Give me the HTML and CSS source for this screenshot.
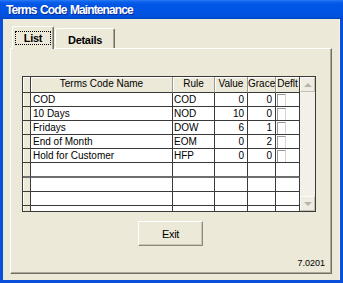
FILE: index.html
```html
<!DOCTYPE html>
<html>
<head>
<meta charset="utf-8">
<link rel="stylesheet" href="styles.css">
</head>
<body>
<div class="window">
  <div class="titlebar"><span class="title">Terms Code Maintenance</span></div>
  <div class="client">
    <div class="tabs">
      <div class="tab active"><span class="focus">List</span></div>
      <div class="tab">Details</div>
    </div>
    <div class="panel">
      <div class="grid">
        <div class="sheet">
          <div class="row head">
            <div class="c sel"></div><div class="c name">Terms Code Name</div><div class="c rule">Rule</div><div class="c val">Value</div><div class="c grace">Grace</div><div class="c deflt">Deflt</div>
          </div>
          <div class="row">
            <div class="c sel"></div><div class="c name">COD</div><div class="c rule">COD</div><div class="c val num">0</div><div class="c grace num">0</div><div class="c deflt"><span class="chk"></span></div>
          </div>
          <div class="row">
            <div class="c sel"></div><div class="c name">10 Days</div><div class="c rule">NOD</div><div class="c val num">10</div><div class="c grace num">0</div><div class="c deflt"><span class="chk"></span></div>
          </div>
          <div class="row">
            <div class="c sel"></div><div class="c name">Fridays</div><div class="c rule">DOW</div><div class="c val num">6</div><div class="c grace num">1</div><div class="c deflt"><span class="chk"></span></div>
          </div>
          <div class="row">
            <div class="c sel"></div><div class="c name">End of Month</div><div class="c rule">EOM</div><div class="c val num">0</div><div class="c grace num">2</div><div class="c deflt"><span class="chk"></span></div>
          </div>
          <div class="row">
            <div class="c sel"></div><div class="c name">Hold for Customer</div><div class="c rule">HFP</div><div class="c val num">0</div><div class="c grace num">0</div><div class="c deflt"><span class="chk"></span></div>
          </div>
          <div class="row sep">
            <div class="c sel"></div><div class="c name"></div><div class="c rule"></div><div class="c val"></div><div class="c grace"></div><div class="c deflt"></div>
          </div>
          <div class="row">
            <div class="c sel"></div><div class="c name"></div><div class="c rule"></div><div class="c val"></div><div class="c grace"></div><div class="c deflt"></div>
          </div>
          <div class="row">
            <div class="c sel"></div><div class="c name"></div><div class="c rule"></div><div class="c val"></div><div class="c grace"></div><div class="c deflt"></div>
          </div>
          <div class="row">
            <div class="c sel"></div><div class="c name"></div><div class="c rule"></div><div class="c val"></div><div class="c grace"></div><div class="c deflt"></div>
          </div>
        </div>
        <div class="vscroll">
          <div class="sbtn"><span class="arrow up"></span></div>
          <div class="track"></div>
          <div class="sbtn"><span class="arrow down"></span></div>
        </div>
      </div>
      <div class="button">Exit</div>
      <div class="version">7.0201</div>
    </div>
  </div>
</div>
</body>
</html>
```

FILE: styles.css
```css
html, body {
  margin: 0;
  padding: 0;
}
body {
  width: 343px;
  height: 283px;
  overflow: hidden;
  font-family: "Liberation Sans", Arial, sans-serif;
  background: #ECE9D8;
}
.window {
  width: 343px;
  height: 283px;
  display: flex;
  flex-direction: column;
  background: #0A4FDA;
}
.titlebar {
  height: 19px;
  flex: none;
  background: linear-gradient(to bottom, #2A7AF5 0px, #0A60EA 2px, #0055E4 5px, #0054E3 12px, #0050DC 17px, #0044C0 19px);
  display: flex;
  align-items: center;
  padding-left: 6px;
}
.title {
  color: #fff;
  font-family: "Liberation Sans", Arial, sans-serif;
  font-weight: bold;
  font-size: 12px;
  letter-spacing: -0.9px;
  word-spacing: 1px;
  line-height: 19px;
  text-shadow: 1px 1px 0 #0A2A9A;
  padding-top: 1px;
}
.client {
  flex: 1;
  margin: 0 3px 3px 3px;
  background: #ECE9D8;
  display: flex;
  flex-direction: column;
  padding: 7px 8px 6px 7px;
  box-shadow: inset -1px 0 0 #F6F5EE;
}
.tabs {
  height: 22px;
  flex: none;
  display: flex;
  align-items: flex-end;
  padding-left: 2px;
  position: relative;
  z-index: 1;
}
.tab {
  box-sizing: border-box;
  height: 20px;
  width: 60px;
  margin-left: 1px;
  border-left: 1px solid #fff;
  border-top: 1px solid #fff;
  border-right: 1px solid #716F64;
  box-shadow: inset -1px 0 0 #ACA899;
  border-radius: 2px 2px 0 0;
  font-size: 11px;
  font-weight: bold;
  color: #000;
  display: flex;
  align-items: center;
  justify-content: center;
  padding-top: 2px;
  letter-spacing: -0.3px;
}
.tab.active {
  width: 42px;
  height: 23px;
  margin-left: 0;
  margin-bottom: -1px;
  background: #ECE9D8;
  padding: 3px 2px 3px 2px;
}
.focus {
  box-sizing: border-box;
  width: 38px;
  height: 14px;
  border: 1px dotted #000;
  display: flex;
  align-items: center;
  justify-content: center;
}
.panel {
  box-sizing: border-box;
  height: 226px;
  flex: none;
  border: 1px solid;
  border-color: #fff #716F64 #716F64 #fff;
  box-shadow: inset -1px -1px 0 #ACA899;
  display: flex;
  flex-direction: column;
}
.grid {
  box-sizing: border-box;
  width: 294px;
  height: 136px;
  margin: 27px 0 0 11px;
  border: 1px solid #3A3A3A;
  display: flex;
  background: #fff;
}
.sheet {
  width: 277px;
  overflow: hidden;
  display: flex;
  flex-direction: column;
}
.row {
  display: flex;
  height: 14px;
  flex: none;
}
.row.head {
  height: 16px;
}
.c {
  box-sizing: border-box;
  height: 100%;
  border-right: 1px solid #3A3A3A;
  border-bottom: 1px solid #3A3A3A;
  font-size: 10px;
  line-height: 13px;
  color: #000;
  white-space: nowrap;
  overflow: hidden;
  padding: 0 2px;
  background: #fff;
}
.row.sep .c {
  border-bottom: 2px solid #6E6E6E;
}
.row.sep {
  height: 15px;
}
.sel { width: 8px; background: #ECE9D8; box-shadow: inset 1px 0 0 #fff; }
.name { width: 142px; }
.rule { width: 42px; padding-left: 1px; }
.val { width: 33px; }
.grace { width: 28px; }
.deflt { width: 24px; padding: 1px 0 0 1px; }
.num { text-align: right; padding-right: 3px; }
.head .c {
  background: #ECE9D8;
  text-align: center;
  border-right-color: #9D9A8C;
  box-shadow: inset 1px 1px 0 #fff;
  line-height: 14px;
  padding: 0;
}
.head .sel {
  border-right-color: #3A3A3A;
}
.head .deflt {
  border-right-color: #3A3A3A;
}
.chk {
  display: block;
  box-sizing: border-box;
  width: 9px;
  height: 13px;
  background: #fff;
  border-left: 1px solid #9A9A9A;
  border-top: 1px solid #9A9A9A;
  border-right: 1px solid #D8D6CC;
}
.vscroll {
  width: 15px;
  display: flex;
  flex-direction: column;
  background: #F2F0E8;
}
.track {
  flex: 1;
}
.sbtn {
  box-sizing: border-box;
  height: 15px;
  flex: none;
  background: #EFEDE3;
  border: 1px solid;
  border-color: #FBFAF6 #C4C1B2 #C4C1B2 #FBFAF6;
  display: flex;
  align-items: center;
  justify-content: center;
}
.arrow {
  width: 0;
  height: 0;
  border-left: 4px solid transparent;
  border-right: 4px solid transparent;
}
.arrow.up { border-bottom: 4px solid #B8B5A6; }
.arrow.down { border-top: 4px solid #B8B5A6; }
.button {
  box-sizing: border-box;
  width: 65px;
  height: 25px;
  margin: 9px 0 0 127px;
  border: 1px solid;
  border-color: #fff #8E8B7C #8E8B7C #fff;
  box-shadow: inset -1px -1px 0 #C9C6B6;
  background: #ECE9D8;
  font-size: 11px;
  color: #000;
  display: flex;
  align-items: center;
  justify-content: center;
  letter-spacing: -0.3px;
}
.version {
  align-self: flex-end;
  margin: 12px 6px 0 0;
  font-size: 9px;
  line-height: 11px;
  color: #000;
}
```
